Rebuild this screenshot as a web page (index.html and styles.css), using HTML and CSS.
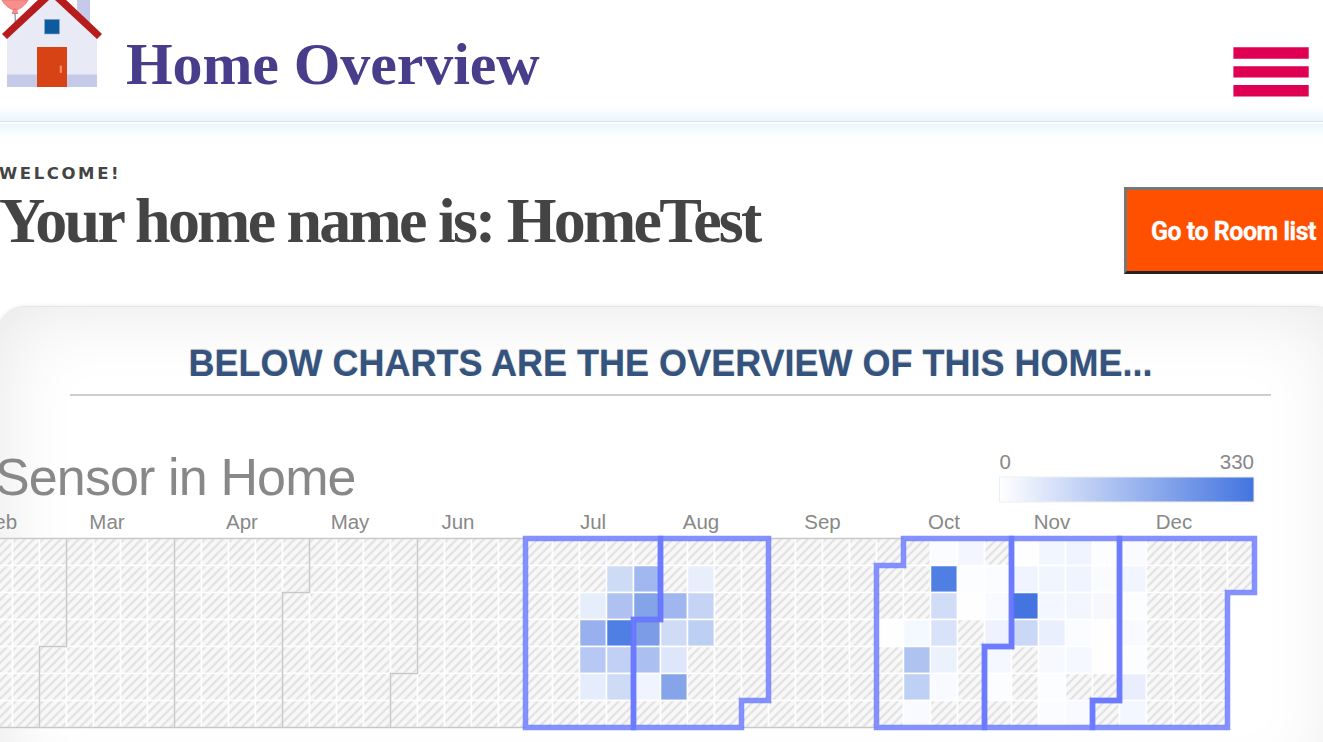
FILE: index.html
```html
<!DOCTYPE html>
<html lang="en">
<head>
<meta charset="utf-8">
<title>Home Overview</title>
<link rel="stylesheet" href="styles.css">
</head>
<body>
<header class="topbar">
  <svg class="logo" width="104" height="88" viewBox="0 0 104 88" aria-hidden="true">
    <rect x="77" y="0" width="13" height="30" fill="#c5cae9"/>
    <path d="M52 -10L97 35V75H7V35Z" fill="#e8eaf6"/>
    <rect x="7" y="74.500" width="90" height="12.500" fill="#c5cae9"/>
    <path d="M15 12L15.500 27" stroke="#78909c" stroke-width="1.200"/>
    <path d="M2 0C5 6 11 10 15 10C19 10 25 6 28 0Z" fill="#f88f8b" stroke="#e57373" stroke-width=".8"/>
    <path d="M14 9L12 13.500H18L16 9Z" fill="#f88f8b" stroke="#d96565" stroke-width=".7"/>
    <path d="M2 34L40 -2H64L102 34L97 39L55 0H49L7 39Z" fill="#b71c1c"/>
    <rect x="44.500" y="19.300" width="15" height="14.700" fill="#0d5a9d" stroke="#90aed3" stroke-width=".6"/>
    <rect x="37" y="47" width="30" height="40" fill="#d84315"/>
    <rect x="59.700" y="65.500" width="2.300" height="7.500" rx=".8" fill="#ff8a65"/>
  </svg>
  <h1 class="brand">Home Overview</h1>
  <svg class="menu" width="76" height="50" viewBox="0 0 76 50" aria-hidden="true">
    <path d="M.4 .3H75.700V11.700H.4ZM.4 19.200H75.700V30.500H.4ZM.4 38H75.700V49.500H.4Z" fill="#df0054"/>
  </svg>
</header>
<section class="intro">
  <div>
    <p class="welcome">WELCOME!</p>
    <h2 class="home-name">Your home name is: HomeTest</h2>
  </div>
  <button class="rooms">Go to Room list</button>
</section>
<main class="panel">
  <h3 class="panel-title">BELOW CHARTS ARE THE OVERVIEW OF THIS HOME...</h3>
  <svg class="chart" id="chart" width="1323" height="300" viewBox="0 442 1323 300">
    <defs>
      <pattern id="hatch" width="9" height="9" x="12.500" y="538.500" patternUnits="userSpaceOnUse">
        <rect width="9" height="9" fill="#f8f8f8"/>
        <path d="M-1 5L5 -1M3 10L10 3" stroke="#ddd" stroke-width="1.900"/>
      </pattern>
      <linearGradient id="scale"><stop offset="0" stop-color="#fff"/><stop offset="1" stop-color="#4374e0"/></linearGradient>
    </defs>
    <text x="-5" y="495" class="chart-title" textLength="361.500">Sensor in Home</text>
    <text x="999.500" y="469" class="label">0</text>
    <text x="1254" y="469" class="label" text-anchor="end">330</text>
    <rect x="999.500" y="477" width="254.500" height="25" fill="url(#scale)" stroke="#eee"/>
    <g id="months"></g>
    <g id="cells"></g>
    <path class="quiet" d="M0 538.500H525M0 727.500H525M66.500 538.500V646.500H39.500V727.500M174.500 538.500V727.500M309.500 538.500V592.500H282.500V727.500M417.500 538.500V673.500H390.500V727.500M768 538.500H904M741 727.500H877"/>
    <g id="outlines"></g>
  </svg>
</main>
<script src="chart.js"></script>
</body>
</html>
```
FILE: styles.css
```css
html { overflow: hidden; }
body { margin: 0; height: 742px; overflow: hidden; background: #fff; }
h1, h2, h3, p { margin: 0; }
.topbar {
  display: flex; align-items: flex-start; height: 121px; position: relative;
  border-bottom: 1px solid #dde2e6;
  background: linear-gradient(to bottom, #fff 106px, #eaf6fe 121px);
}
.topbar::after {
  content: ""; position: absolute; left: 0; right: 0; top: 124px; height: 16px;
  background: linear-gradient(to bottom, #eaf6fe, #f7fdff 9px, #fff);
}
.brand {
  margin: 29px 0 0 22px; font: bold 60px/70px "Liberation Serif", serif;
  letter-spacing: -.100px; color: #483d8b; white-space: nowrap;
}
.menu { margin: 47px 14px 0 auto; }
.intro { display: flex; justify-content: space-between; height: 183px; }
.welcome {
  margin: 42px 0 0 -1px; font: bold 16.500px/20px "DejaVu Sans", sans-serif;
  letter-spacing: 2.600px; color: #444;
}
.home-name {
  margin: 1px 0 0 -1px; font: bold 64px/72px "Liberation Serif", serif;
  letter-spacing: -2.780px; color: #444; white-space: nowrap;
}
.rooms {
  flex: none; margin: 65px -20px 0 0; width: 219px; height: 87px; box-sizing: border-box;
  padding: 1px 0 0 24px; border: 3px solid; border-color: #767676 #222 #222 #767676;
  background: #ff5000; color: #fff; text-align: left; white-space: nowrap;
  font: bold 25px Roboto, sans-serif; letter-spacing: -.500px;
  -webkit-text-stroke: .3px #fff;
}
.panel {
  margin: 1px -20px 0 -3px; height: 500px; border: 1px solid #e6e6e6; border-radius: 28px;
  box-shadow: 0 0 4px rgba(0,0,0,.08), inset 0 0 80px rgba(0,0,0,.1); box-sizing: border-box;
}
.panel-title {
  margin: 35px 71px 0 72px; height: 52px; border-bottom: 2px solid #c9ced6;
  font: bold 36px/44px "Liberation Sans", sans-serif; text-align: center; white-space: nowrap;
  color: #34547f; text-shadow: 0 -1px 1px rgba(0,0,0,.3);
}
.chart { display: block; margin: 46px 0 0 2px; }
.chart-title { font: 52px "Liberation Sans", sans-serif; fill: #888; }
.label { font: 20.500px "Liberation Sans", sans-serif; fill: #888; }
.quiet { fill: none; stroke: #c8c8c8; stroke-width: 1.500; }
.cell { stroke: #fff; stroke-width: 1.500; }
.active { fill: none; stroke: #6675ff; stroke-opacity: .8; stroke-width: 5.500; }
```
FILE: chart.js
```js
const NS = "http://www.w3.org/2000/svg";
function add(parent, tag, attrs, text) {
  const el = document.createElementNS(NS, tag);
  for (const k in attrs) el.setAttribute(k, attrs[k]);
  if (text) el.textContent = text;
  document.getElementById(parent).appendChild(el);
}
[["Feb", -0.5], ["Mar", 107], ["Apr", 242], ["May", 350], ["Jun", 458], ["Jul", 593], ["Aug", 701],
 ["Sep", 822.5], ["Oct", 944], ["Nov", 1052], ["Dec", 1174]].forEach(([m, x]) =>
  add("months", "text", { x, y: 529, class: "label", "text-anchor": "middle" }, m));

// Recorded days, keyed by week column then weekday row.
const values = {
  21: { 2: "#e6edfb", 3: "#98b0ee", 4: "#b6c8f3", 5: "#e5ecfb" },
  22: { 1: "#cedbf5", 2: "#afc1f1", 3: "#507fe3", 4: "#c1d0f4", 5: "#cedbf5" },
  23: { 1: "#a0b7ef", 2: "#84a4e9", 3: "#7d9ce8", 4: "#abc0f0", 5: "#eff4fe" },
  24: { 2: "#a0b6ef", 3: "#d0dbf6", 4: "#dde6fa", 5: "#86a4ea" },
  25: { 1: "#e8eefc", 2: "#c5d3f5", 3: "#bdcff3" },
  32: { 3: "#fefefe" },
  33: { 3: "#f4f8ff", 4: "#afc3f1", 5: "#bed0f3", 6: "#f8faff" },
  34: { 0: "#fafcff", 1: "#507fe3", 2: "#d1ddf7", 3: "#d8e2f8", 4: "#ecf2fd", 5: "#f8faff" },
  35: { 0: "#f3f5ff", 1: "#fcfdff", 2: "#fefefe" },
  36: { 1: "#fafcff", 2: "#f8faff", 3: "#eef2fe", 4: "#f5f8ff", 5: "#fcfdff" },
  37: { 0: "#fefefe", 1: "#f0f4fe", 2: "#4374e0", 3: "#c9d8f5" },
  38: { 0: "#f2f6ff", 1: "#f1f5fe", 2: "#f4f7ff", 3: "#e9effc", 4: "#f7f9fe", 5: "#fcfdff", 6: "#fafcff" },
  39: { 0: "#eff4fe", 1: "#eff4fe", 2: "#f3f6fe", 3: "#fafcff", 4: "#f5f8ff", 6: "#f8faff" },
  40: { 0: "#fcfdff", 1: "#f9fbff", 2: "#f6f8fe", 3: "#fefefe", 4: "#fefefe" },
  41: { 0: "#f9fbff", 1: "#f1f5ff", 2: "#fcfdff", 3: "#f8faff", 4: "#fcfdff", 5: "#e8eefc", 6: "#f3f7ff" }
};
// Column 36 holds Oct's last days above the step and Nov's first days below it.
for (let c = -1; c < 46; c++)
  for (let r = 0; r < (c === 45 ? 2 : 7); r++)
    add("cells", "rect", {
      x: 12.5 + c * 27, y: 538.5 + r * 27, width: 27, height: 27, class: "cell",
      fill: (values[c] && values[c][r]) || "url(#hatch)"
    });
[
  "M525.500 538.500H660.500V619.500H633.500V727.500H525.500Z",
  "M660.500 538.500H768.500V700.500H741.500V727.500H633.500V619.500H660.500Z",
  "M903.500 538.500H1011.500V646.500H984.500V727.500H876.500V565.500H903.500Z",
  "M1011.500 538.500H1119.500V700.500H1092.500V727.500H984.500V646.500H1011.500Z",
  "M1119.500 538.500H1254.500V592.500H1227.500V727.500H1092.500V700.500H1119.500Z"
].forEach(d => add("outlines", "path", { d, class: "active" }));
```
